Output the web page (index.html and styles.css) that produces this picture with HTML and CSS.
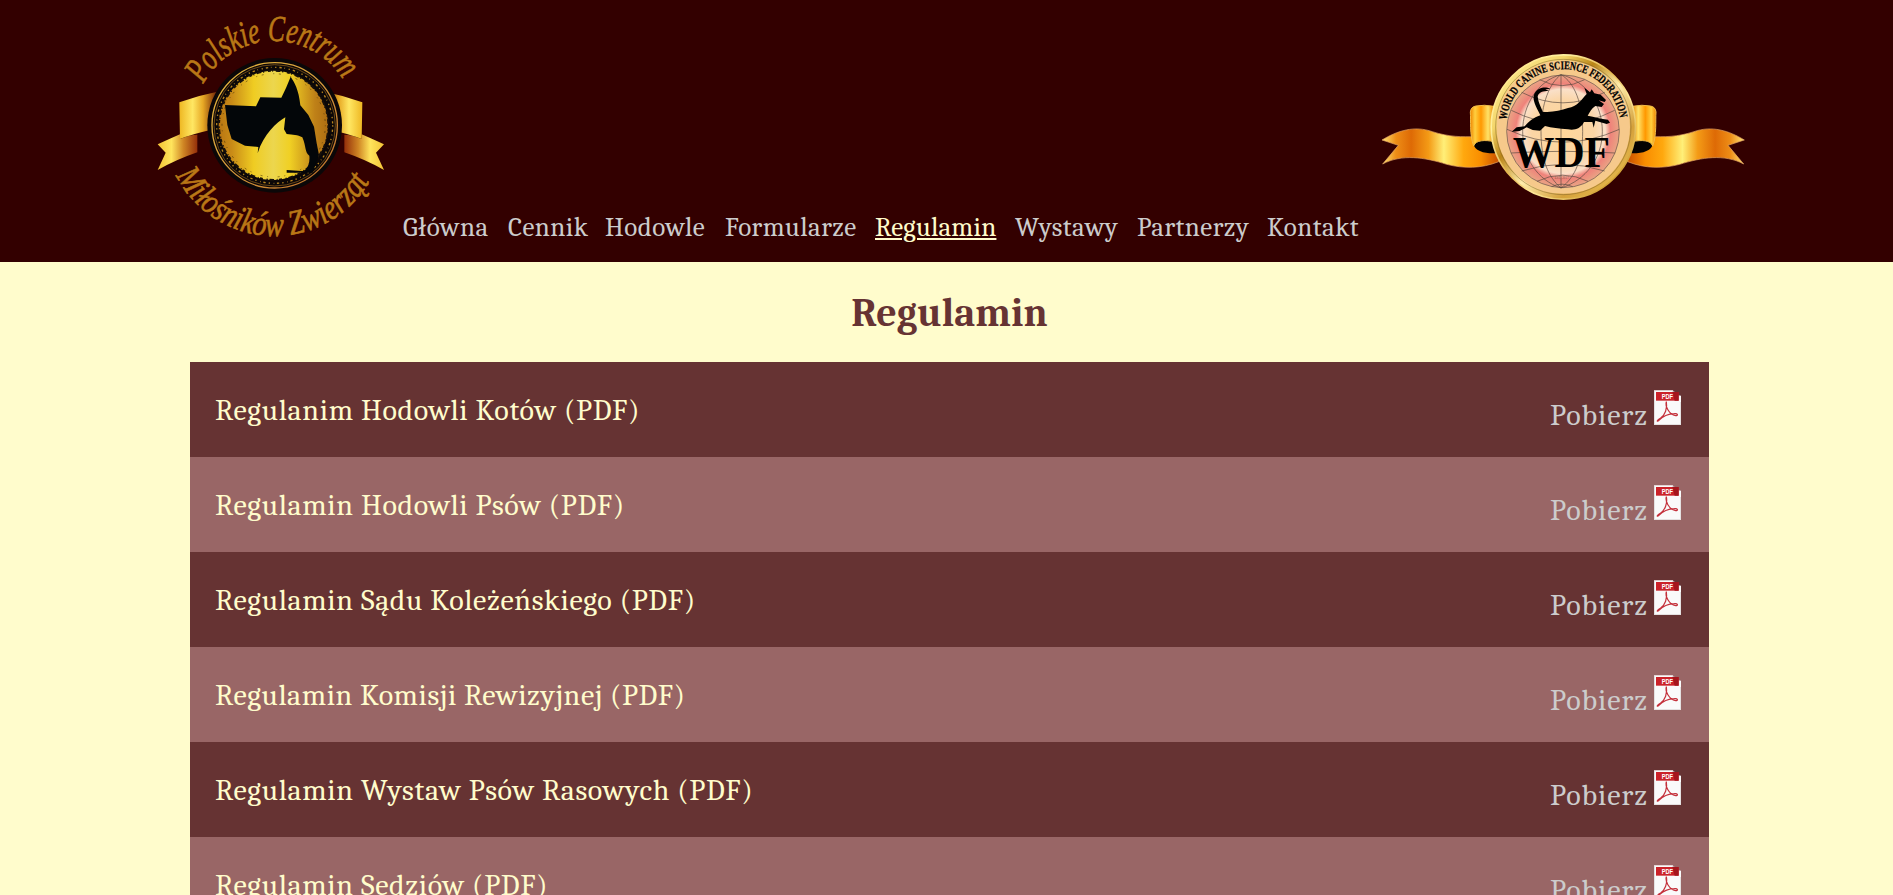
FILE: index.html
```html
<!DOCTYPE html>
<html lang="pl">
<head>
<meta charset="utf-8">
<title>Regulamin</title>
<link rel="stylesheet" href="styles.css">
</head>
<body>
<svg class="defs" aria-hidden="true">
  <symbol id="pdf" viewBox="0 0 81 105">
    <path d="M0 1H57V13L81 17V105H0Z" fill="#fafafa"/>
    <path d="M1 2V104H80V36" fill="none" stroke="#d2cccc" stroke-width="2"/>
    <path d="M56 1V14H73Z" fill="#b9a9a9"/>
    <path d="M6 6H74V32H6Z" fill="#cb2229"/>
    <path d="M55 6H74V32H62Z" fill="#a5161d"/>
    <text x="23" y="26" textLength="34" lengthAdjust="spacingAndGlyphs" class="pdf-label">PDF</text>
    <path d="M37 35C33 48 44 73 65 77C74 77 71 69 61 71C41 71 23 82 12 93C7 96 11 88 20 84C33 75 41 55 37 35" fill="none" stroke="#c4303b" stroke-width="3.6"/>
  </symbol>
</svg>
<header class="header">
  <svg class="logo" viewBox="0 0 780 786" role="img" aria-label="Polskie Centrum Miłośników Zwierząt">
    <defs>
      <linearGradient id="gold"><stop offset="0" stop-color="#b87512"/><stop offset=".12" stop-color="#c98b17"/><stop offset=".32" stop-color="#efcc22"/><stop offset=".5" stop-color="#ecd64e"/><stop offset=".65" stop-color="#f0d024"/><stop offset=".88" stop-color="#bf8118"/><stop offset="1" stop-color="#ad6d12"/></linearGradient>
      <linearGradient id="band"><stop offset="0" stop-color="#eeb722"/><stop offset=".35" stop-color="#ffe763"/><stop offset=".62" stop-color="#e7a925"/><stop offset="1" stop-color="#6c1c04"/></linearGradient>
      <linearGradient id="tail"><stop offset="0" stop-color="#f3c335"/><stop offset=".35" stop-color="#ffe45c"/><stop offset=".65" stop-color="#cf8524"/><stop offset="1" stop-color="#942f0a"/></linearGradient>
      <linearGradient id="rim" x2="1" y2="1"><stop offset="0" stop-color="#e7b93c"/><stop offset=".5" stop-color="#d59a3c"/><stop offset="1" stop-color="#bb6b28"/></linearGradient>
      <path id="arcTop" d="M190 252A240 240 0 0 1 625 272"/>
      <path id="arcBottom" d="M108 526A330 330 0 0 0 702 518"/>
      <g id="ribbon"><path d="M53 433Q88 417 120 403V417Q150 404 172 404V457Q108 479 53 510L77 458Z" fill="url(#tail)"/><path d="M118 307Q174 286 232 275L208 391Q156 403 120 417Z" fill="url(#band)"/></g>
    </defs>
    <use href="#ribbon"/>
    <use href="#ribbon" transform="translate(785 0) scale(-1 1)"/>
    <circle cx="404" cy="376" r="202" fill="#0b0708"/>
    <circle cx="404" cy="376" r="188" fill="none" stroke="url(#rim)" stroke-width="4"/>
    <circle cx="404" cy="376" r="182" fill="none" stroke="#9b681d" stroke-width="2"/>
    <circle cx="404" cy="376" r="174" fill="none" stroke="#b8851e" stroke-width="4" stroke-dasharray="4 9 7 8 2 11"/>
    <circle cx="400" cy="376" r="164" fill="url(#gold)"/>
    <circle cx="401" cy="376" r="164" fill="none" stroke="#17100a" stroke-width="6" stroke-dasharray="9 4 3 8 14 5 4 11"/>
    <circle cx="401" cy="376" r="155" fill="none" stroke="#4b350b" stroke-width="2" stroke-dasharray="3 14 6 29"/>
    <path d="M255 315L348 319L361 292L424 293C434 274 443 252 452 230C463 247 476 267 481 316L505 345L522 380L530 430L537 465L518 518H440V510L495 514Q511 492 508 467C494 458 499 439 487 412C473 404 459 404 440 402L432 388L436 352C410 367 371 402 353 460L355 441L315 437L275 417L262 375Z" fill="#030609"/>
    <text class="script script-top"><textPath href="#arcTop" textLength="508" lengthAdjust="spacingAndGlyphs">Polskie Centrum</textPath></text>
    <text class="script script-bottom"><textPath href="#arcBottom" textLength="710" lengthAdjust="spacingAndGlyphs">Miłośników Zwierząt</textPath></text>
  </svg>
  <nav class="nav">
    <a>Główna</a><a>Cennik</a><a>Hodowle</a><a>Formularze</a><a class="active">Regulamin</a><a>Wystawy</a><a>Partnerzy</a><a>Kontakt</a>
  </nav>
  <svg class="wdf" viewBox="0 0 1170 510" role="img" aria-label="World Canine Science Federation">
    <defs>
      <linearGradient id="wing"><stop offset="0" stop-color="#ffe576"/><stop offset=".12" stop-color="#ed8d16"/><stop offset=".25" stop-color="#de6a05"/><stop offset=".4" stop-color="#f49b16"/><stop offset=".53" stop-color="#ffef78"/><stop offset=".7" stop-color="#ffa80e"/><stop offset=".85" stop-color="#f98d00"/><stop offset="1" stop-color="#c94f00"/></linearGradient>
      <linearGradient id="fold"><stop offset="0" stop-color="#ef8500"/><stop offset=".2" stop-color="#ffcf3f"/><stop offset=".45" stop-color="#ff9800"/><stop offset=".75" stop-color="#ffe267"/><stop offset="1" stop-color="#e88100"/></linearGradient>
      <linearGradient id="medal" x1=".1" y1=".1" x2=".9" y2=".9"><stop offset="0" stop-color="#ffe68c"/><stop offset=".2" stop-color="#fff0a0"/><stop offset=".45" stop-color="#e3b44d"/><stop offset=".65" stop-color="#ffe99a"/><stop offset="1" stop-color="#c99524"/></linearGradient>
      <linearGradient id="edge" x2="1" y2="1"><stop offset="0" stop-color="#fff0a0"/><stop offset=".25" stop-color="#f4d66a"/><stop offset=".38" stop-color="#ba8516"/><stop offset=".55" stop-color="#ffedac"/><stop offset=".75" stop-color="#d5a13b"/><stop offset="1" stop-color="#efc858"/></linearGradient>
      <radialGradient id="world"><stop offset="0" stop-color="#ffd79b"/><stop offset=".55" stop-color="#fbd5a5"/><stop offset=".75" stop-color="#fae0c9"/><stop offset=".84" stop-color="#ef827a"/><stop offset="1" stop-color="#e9a484"/></radialGradient>
      <path id="arcWorld" d="M410 240A171 171 0 0 1 750 240"/>
      <g id="wing-shape">
        <path d="M36 300C82 272 134 256 187 275C237 291 277 291 318 290L386 343V365C333 386 282 386 230 373C164 352 96 341 38 372L85 316Z" fill="url(#wing)" stroke="#e9a765" stroke-width="2"/>
        <path d="M310 309Q340 289 380 307L375 340C345 341 312 334 310 309Z" fill="#030202"/>
        <path d="M318 198Q342 193 372 199V305C345 299 317 300 311 318C298 284 303 240 301 216Q303 200 318 198Z" fill="url(#fold)" stroke="#f3bc48" stroke-width="3"/>
      </g>
    </defs>
    <use href="#wing-shape"/>
    <use href="#wing-shape" transform="translate(1159 0) scale(-1 1)"/>
    <circle cx="580" cy="261" r="215" fill="#f6c98b" stroke="url(#medal)" stroke-width="8"/>
    <circle cx="580" cy="261" r="207" fill="none" stroke="url(#edge)" stroke-width="14"/>
    <circle cx="580" cy="261" r="203" fill="none" stroke="#83632d" stroke-width="1.5"/>
    <circle cx="579" cy="274" r="169" fill="url(#world)" stroke="#64534a" stroke-width="2"/>
    <g class="grid-lines">
      <path d="M573 104V444M573 104C540 128 513 190 513 274S533 410 573 444M573 104C614 128 638 190 638 274S617 410 573 444M573 104C504 122 458 195 458 274S501 420 573 444M573 104C649 122 697 195 697 274S649 420 573 444"/>
      <path d="M509 119Q576 155 644 119M455 157Q578 220 704 157M424 211Q579 290 734 211M411 268Q578 345 748 268M423 339Q578 329 735 339M455 393Q578 353 704 393M501 424Q578 387 654 424M545 440Q576 425 608 440"/>
    </g>
    <text class="fed"><textPath href="#arcWorld" textLength="494" lengthAdjust="spacingAndGlyphs">WORLD CANINE SCIENCE FEDERATION</textPath></text>
    <path d="M425 275L440 262L464 259C477 244 490 233 511 226C500 203 486 181 492 164C500 143 525 138 541 147L526 148L537 153C518 153 507 156 503 169C505 190 515 205 518 215C546 218 571 211 594 204C622 200 635 178 650 162L643 143L660 157L665 148L673 160L692 164L708 180L704 186L686 181L702 192L695 201L676 198C663 207 659 217 653 227C673 231 694 236 714 239L720 248L710 252L676 242L671 263L667 246L642 246C632 266 613 272 594 268C567 265 545 264 525 258L510 272L488 270L470 262L449 273Z" fill="#000"/>
    <text x="428" y="380" textLength="292" lengthAdjust="spacingAndGlyphs" class="initials">WDF</text>
    <text x="554" y="417" textLength="42" class="tiny">EST. 2017</text>
  </svg>
</header>
<main class="content">
  <h1>Regulamin</h1>
  <ul class="list">
    <li><span>Regulanim Hodowli Kotów (PDF)</span><a class="get">Pobierz <svg class="pdf"><use href="#pdf"/></svg></a></li>
    <li><span>Regulamin Hodowli Psów (PDF)</span><a class="get">Pobierz <svg class="pdf"><use href="#pdf"/></svg></a></li>
    <li><span>Regulamin Sądu Koleżeńskiego (PDF)</span><a class="get">Pobierz <svg class="pdf"><use href="#pdf"/></svg></a></li>
    <li><span class="tight">Regulamin Komisji Rewizyjnej (PDF)</span><a class="get">Pobierz <svg class="pdf"><use href="#pdf"/></svg></a></li>
    <li><span>Regulamin Wystaw Psów Rasowych (PDF)</span><a class="get">Pobierz <svg class="pdf"><use href="#pdf"/></svg></a></li>
    <li><span>Regulamin Sedziów (PDF)</span><a class="get">Pobierz <svg class="pdf"><use href="#pdf"/></svg></a></li>
  </ul>
</main>
</body>
</html>
```
FILE: styles.css
```css
* { box-sizing: border-box; }
html, body { height: 100%; overflow: hidden; }
body { margin: 0; background: #fffccc; font-family: Cambria, Caladea, "Liberation Serif", serif; }
.defs { display: none; }
.header { display: flex; height: 262px; padding-left: 140px; background: #300; }
.logo { width: 260px; height: 262px; flex: none; }
.nav { display: grid; grid-template-columns: 105px 97px 120px 150px 140px 122px 130px 100px; width: 970px; flex: none; padding: 212px 0 0 3px; font-size: 27px; line-height: 32px; letter-spacing: .45px; color: #ccc; white-space: nowrap; }
.nav a { justify-self: start; }
.nav .active { letter-spacing: .2px; color: #fffccc; text-decoration: underline; text-decoration-thickness: 2px; text-underline-offset: 2px; }
.wdf { width: 390px; height: 170px; margin-top: 40px; flex: none; }
.content { width: 1519px; margin-left: 190px; }
h1 { margin: 0; padding-top: 28px; height: 100px; font-size: 40px; line-height: 47px; letter-spacing: .1px; text-align: center; color: #633; }
.list { margin: 0; padding: 0; list-style: none; font-size: 30px; line-height: 35px; letter-spacing: .64px; color: #fffccc; }
.list li { display: flex; justify-content: space-between; height: 95px; padding: 31px 28px 0 25px; background: #633; }
.list li:nth-child(even) { background: #966; }
.list .tight { letter-spacing: .54px; }
.get { display: flex; align-items: baseline; gap: 6px; height: 40px; margin-top: -3px; letter-spacing: .92px; color: #ccc; }
.pdf { width: 27px; height: 35px; }
.pdf-label { font: bold 22px "Liberation Sans", sans-serif; letter-spacing: 0; fill: #fff; }
.script { font-family: "Liberation Serif", serif; font-style: italic; fill: #b97716; stroke: #b97716; stroke-width: 2px; }
.script-top { font-size: 110px; }
.script-bottom { font-size: 104px; }
.grid-lines { fill: none; stroke: #57483f; stroke-width: 2px; }
.fed { font: bold 35px "Liberation Serif", serif; stroke: #000; stroke-width: .8px; }
.initials { font: bold 133px "Liberation Serif", serif; }
.tiny { font: 9px "Liberation Serif", serif; fill: #7c4f3c; }
```
